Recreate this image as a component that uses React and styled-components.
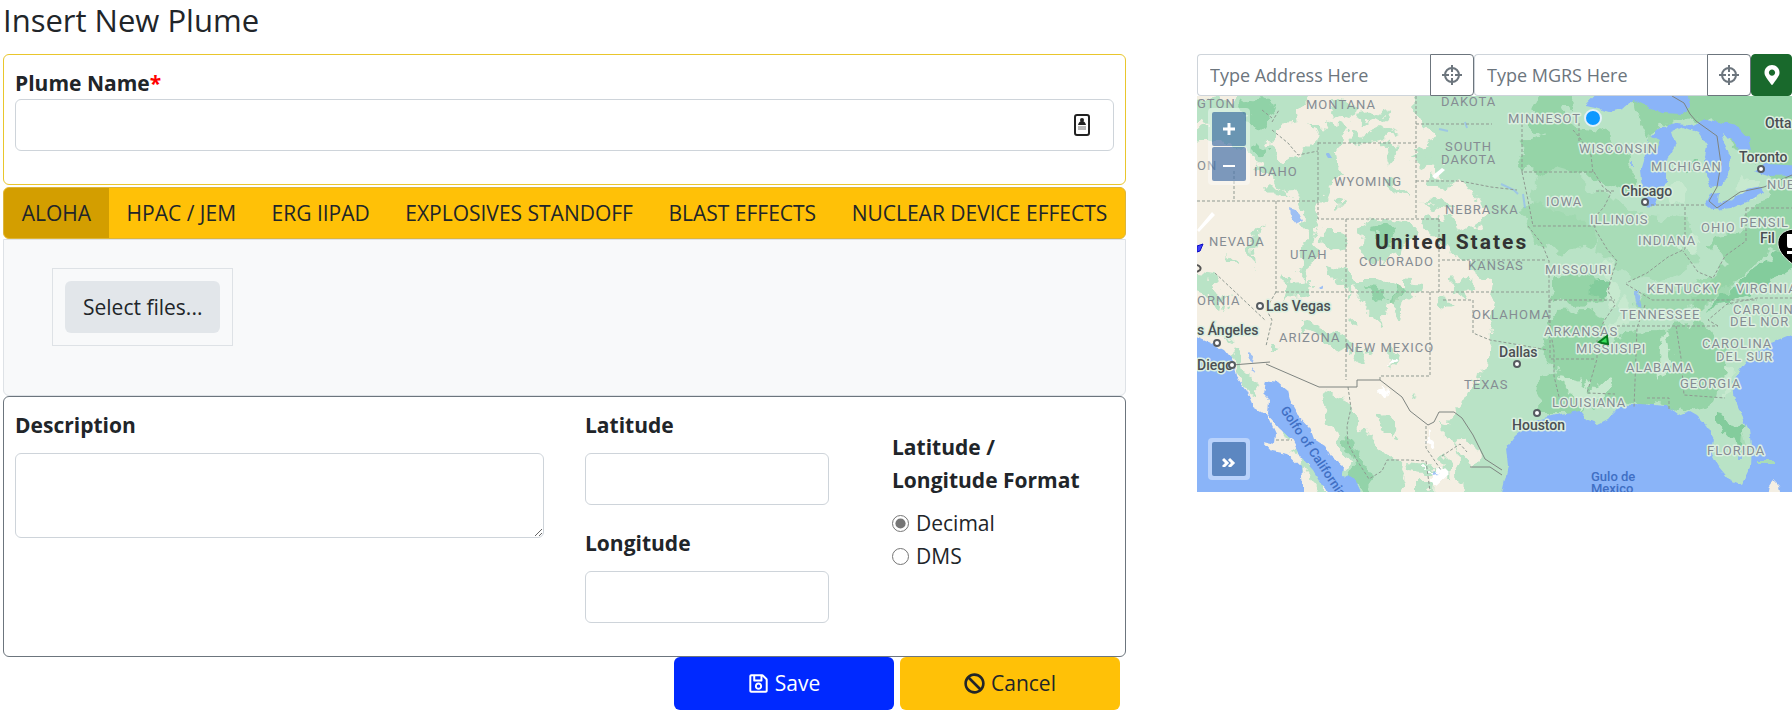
import React from 'react';
import styled, { createGlobalStyle } from 'styled-components';
import { FaRegSave, FaBan, FaMapMarkerAlt } from 'react-icons/fa';

const GlobalStyle = createGlobalStyle`
  * { box-sizing: border-box; }
  body {
    margin: 0;
    background: #fff;
    color: #212529;
    font-family: "Open Sans", "Noto Sans", sans-serif;
    font-size: 21px;
    line-height: 33px;
  }
`

const Page = styled.main`
  padding-left: 3px;
`

const Title = styled.h1`
  margin: 0 0 14px;
  font-size: 31px;
  font-weight: 400;
  line-height: 40px;
`

const Columns = styled.div`
  display: grid;
  grid-template-columns: minmax(0, 1123fr) minmax(0, 595fr);
  gap: 71px;
  align-items: start;
`

const Card = styled.section`
  border: 1px solid ${props => props.$border};
  border-radius: 6px;
  padding: 12px 11px 33px;
`

const Label = styled.label`
  display: block;
  font-weight: 700;
  line-height: 32px;
  margin-bottom: ${props => props.$tight ? 0 : 12}px;
`

const Required = styled.span`
  color: #f00;
`

const Input = styled.input`
  display: block;
  width: 100%;
  height: 52px;
  padding: 8px 16px;
  border: 1px solid #ced4da;
  border-radius: 6px;
  background: #fff;
  color: inherit;
  font: inherit;
`

const InputWrap = styled.div`
  position: relative;
`

const ContactIcon = styled.svg`
  position: absolute;
  top: 15px;
  right: 24px;
`

const TabBar = styled.nav`
  display: flex;
  margin-top: 2px;
  border: 1px solid #dcb53c;
  border-radius: 6px;
  background: #ffc107;
  overflow: hidden;
`

const Tab = styled.button`
  flex: 1 1 auto;
  height: 50px;
  padding: 0;
  border: 0;
  background: ${props => props.$active ? '#d39e00' : 'transparent'};
  color: #212529;
  font: inherit;
  white-space: nowrap;
`

const FilePanel = styled.section`
  border: 1px solid #dee2e6;
  border-radius: 0 0 6px 6px;
  background: #f8f9fa;
  padding: 28px 48px 49px;
`

const FileBox = styled.div`
  display: inline-block;
  vertical-align: top;
  padding: 12px;
  border: 1px solid #dee2e6;
`

const FileButton = styled.button`
  display: block;
  height: 52px;
  padding: 0 18px;
  border: 0;
  border-radius: 6px;
  background: #e2e6ea;
  color: #212529;
  font: inherit;
`

const Details = styled.div`
  display: grid;
  grid-template-columns: minmax(0, 529fr) minmax(0, 244fr) minmax(0, 244fr);
  column-gap: 41px;
`

const TextArea = styled.textarea`
  display: block;
  width: 100%;
  height: 85px;
  padding: 8px 16px;
  border: 1px solid #ced4da;
  border-radius: 6px;
  font: inherit;
  resize: vertical;
`

const Fields = styled.div`
  display: flex;
  flex-direction: column;
  gap: 22px;
`

const Formats = styled.fieldset`
  min-width: 0;
  margin: 0;
  padding: 22px 0 0 22px;
  border: 0;
`

const Legend = styled.legend`
  float: left;
  width: 100%;
  padding: 0;
  margin-bottom: 10px;
  font-weight: 700;
`

const RadioLabel = styled.label`
  display: flex;
  align-items: center;
  gap: 7px;
  clear: both;
`

const Radio = styled.input`
  width: 17px;
  height: 17px;
  margin: 0;
  accent-color: #767676;
`

const Actions = styled.div`
  display: flex;
  justify-content: flex-end;
  gap: 6px;
  padding-right: 6px;
`

const ActionButton = styled.button`
  display: flex;
  align-items: center;
  justify-content: center;
  gap: 6px;
  width: 220px;
  height: 53px;
  border: 0;
  border-radius: 6px;
  background: ${props => props.$primary ? '#0029ff' : '#ffc107'};
  color: ${props => props.$primary ? '#fff' : '#212529'};
  font: inherit;
`

const SearchBar = styled.div`
  display: flex;
`

const SearchInput = styled.input`
  flex: 1 1 0;
  min-width: 0;
  height: 42px;
  padding: 0 12px;
  border: 1px solid #ced4da;
  border-right: 0;
  border-radius: 4px 0 0 4px;
  color: inherit;
  font: inherit;
  font-size: 18px;
  &::placeholder {
    color: #6c757d;
    opacity: 1;
  }
`

const IconButton = styled.button`
  display: flex;
  align-items: center;
  justify-content: center;
  width: ${props => props.$solid ? 41 : 44}px;
  height: 42px;
  padding: 0;
  border: 1px solid ${props => props.$solid ? '#19692c' : '#6c757d'};
  border-radius: ${props => props.$solid ? '4px' : '0 4px 4px 0'};
  background: ${props => props.$solid ? '#19692c' : '#fff'};
  color: ${props => props.$solid ? '#fff' : '#6c757d'};
`

const MapFrame = styled.div`
  position: relative;
  overflow: hidden;
`

const MapSvg = styled.svg`
  display: block;
  width: 100%;
  height: auto;
  font-family: Roboto, sans-serif;
  .halo { paint-order: stroke; stroke: #dcefe0; stroke-width: 3px; stroke-linejoin: round; }
  .state { font-size: 13px; fill: #858c93; letter-spacing: 1px; }
  .city { font-size: 14px; fill: #4b4f54; font-weight: 500; }
  .country { font-size: 21px; fill: #333; font-weight: 700; letter-spacing: 2px; }
  .sea { font-size: 13px; fill: #3f6fc4; font-weight: 500; }
`

const MapControls = styled.div`
  position: absolute;
  left: 11px;
  ${props => props.$bottom ? 'bottom: 12px;' : 'top: 12px;'}
  display: grid;
  gap: 1px;
  padding: 4px;
  border-radius: 4px;
  background: rgba(255, 255, 255, 0.4);
`

const MapButton = styled.button`
  display: flex;
  align-items: center;
  justify-content: center;
  width: 34px;
  height: 34px;
  padding: 0;
  border: 0;
  border-radius: 2px;
  background: rgba(0, 60, 136, 0.5);
  color: #fff;
`

const Crosshair = () => (
  <svg width="20" height="20" viewBox="0 0 20 20" fill="none" stroke="currentColor" strokeWidth="2">
    <circle cx="10" cy="10" r="7" />
    <path d="M10 0v7M10 13v7M0 10h7M13 10h7" />
    <path d="M9 10h2" />
  </svg>
)

const tabs = ['ALOHA', 'HPAC / JEM', 'ERG IIPAD', 'EXPLOSIVES STANDOFF', 'BLAST EFFECTS', 'NUCLEAR DEVICE EFFECTS']

// [name, x, y] with x at the start of the label
const states = [
  ['GTON', 0, 12], ['MONTANA', 109, 13], ['DAKOTA', 244, 10], ['MINNESOT', 311, 27],
  ['SOUTH', 248, 55], ['DAKOTA', 244, 68], ['IDAHO', 57, 80], ['ON', 0, 74],
  ['WYOMING', 137, 90], ['WISCONSIN', 382, 57], ['MICHIGAN', 454, 75], ['NUE', 570, 93],
  ['NEBRASKA', 248, 118], ['IOWA', 349, 110], ['ILLINOIS', 393, 128], ['OHIO', 504, 136],
  ['PENSIL', 543, 131], ['INDIANA', 441, 149], ['NEVADA', 12, 150], ['UTAH', 93, 163],
  ['COLORADO', 162, 170], ['KANSAS', 271, 174], ['MISSOURI', 348, 178], ['KENTUCKY', 450, 197],
  ['VIRGINIA', 539, 197], ['ORNIA', 0, 209], ['TENNESSEE', 423, 223], ['OKLAHOMA', 275, 223],
  ['CAROLIN', 536, 218], ['DEL NOR', 533, 230], ['ARIZONA', 82, 246], ['ARKANSAS', 347, 240],
  ['NEW MEXICO', 148, 256], ['MISSIISIPI', 379, 257], ['CAROLINA', 505, 252], ['DEL SUR', 519, 265],
  ['ALABAMA', 429, 276], ['TEXAS', 267, 293], ['GEORGIA', 483, 292], ['LOUISIANA', 355, 311],
  ['FLORIDA', 510, 359],
]

const cities = [
  ['Otta', 568, 32, 0, 0], ['Toronto', 542, 66, 564, 73], ['Chicago', 424, 100, 448, 106],
  ['Las Vegas', 69, 215, 63, 210], ['s Ángeles', 0, 239, 20, 247], ['Diego', 0, 274, 35, 269],
  ['Dallas', 302, 261, 320, 268], ['Houston', 315, 334, 340, 317], ['Fil', 563, 147, 0, 0],
]

const UsMap = () => (
  <MapSvg viewBox="0 0 595 396" role="img" aria-label="Map of the United States">
    <defs>
      {/* breaks up the straight edges of woods and coasts */}
      <filter id="rough" x="0" y="0" width="595" height="396" filterUnits="userSpaceOnUse">
        <feTurbulence type="fractalNoise" baseFrequency="0.07" numOctaves="3" seed="4" />
        <feDisplacementMap in="SourceGraphic" scale="20" xChannelSelector="R" yChannelSelector="G" />
      </filter>
      <filter id="coast" x="0" y="0" width="595" height="396" filterUnits="userSpaceOnUse">
        <feTurbulence type="fractalNoise" baseFrequency="0.12" numOctaves="2" seed="9" />
        <feDisplacementMap in="SourceGraphic" scale="6" xChannelSelector="R" yChannelSelector="G" />
      </filter>
    </defs>
    <rect width="595" height="396" fill="#f4efe3" />

    <g filter="url(#rough)">
      {/* eastern plains and woodland */}
      <path fill="#b9e3c6" d="M220 -20H620V420H277L274 374L283 357L262 342L253 322L267 306L271 291L286 280L289 263L291 247L296 226L291 208L294 190L280 178L271 164L252 158L236 139L224 130L233 119L254 124L269 133L284 128L291 113L277 95L265 89L249 86L237 76L244 66L222 64L219 51L235 46L242 38L226 31L218 18Z" />
      <path fill="#95d4a7" d="M350 -20L379 4L367 14L378 34L395 36L413 43L430 53L439 80L432 99L410 89L387 78L371 91L352 88L325 70L327 46L345 39L331 26Z" />
      <path fill="#95d4a7" d="M430 -20H620V147L569 157L549 177L525 194L507 212L494 207L516 182L532 166L513 154L525 139L548 136L551 116L574 101L570 72L545 60L527 31L483 24L450 38L438 17Z" />
      <path fill="#95d4a7" d="M352 181L374 175L397 181L410 194L400 207L377 208L356 202ZM361 214L389 213L406 222L411 248L427 237L457 234L481 229L506 224L521 243L535 251L526 276L519 305L492 315L453 306L413 307L387 316L340 316L341 282L359 276L345 253L350 229Z" />
      <path fill="#95d4a7" d="M447 195L483 193L512 181L538 185L523 204L499 209L476 222L450 218L441 207ZM324 111L351 99L389 108L409 132L394 150L357 155L337 143Z" opacity=".7" />
      <path fill="#a8dcb7" d="M340 82L360 73L381 79L395 94L425 104L441 119L466 121L494 126L487 149L502 166L483 176L462 184L430 181L414 164L398 157L401 135L379 120L350 113L331 101Z" />
      <path fill="#83cc9c" d="M390 190c8-9 25-10 24 2c-1 9-12 11-18 7ZM538 188l26-20l51-36v28l-53 34l-34 16l-18 4ZM492 66l9-3l1 11l-8 3ZM520 320l16 4l10 13l4 19l-7 5l-9-17l-14-15Z" />
      <path fill="#c7e9cf" d="M404 164l14 4l-2 17l9 10l-8 19l-10-16l5-15ZM362 278l21 5l10 13l20-18l3 12l-18 20l-14 5ZM526 269l12 3l-3 26l-8 3ZM464 91l18-5l12 18l-18 6ZM542 79l21 7l-5 18l-15-6ZM489 136l20 9l-11 12l-14-7ZM428 198l11 18l-16 18l-11-2ZM466 230l8 38l-9 17l-5-18Z" />

      {/* mountain forests of the west */}
      <path fill="#b9e3c6" d="M-10 8L18 2L31 10L46 -20H103L111 9L97 13L99 25L83 28L72 45L79 59L91 67L104 57L116 46L118 35L110 28L127 31L138 25L151 33L145 45L136 54L137 67L143 77L134 88L127 104L120 111L123 127L118 142L124 158L109 172L111 187L102 176L105 155L112 137L103 125L105 109L98 90L92 95L81 88L74 74L58 69L49 54L31 53L22 43L9 47L-10 42L13 29L-10 24Z" />
      <path fill="#83cc9c" d="M44 5L65 2L77 10L72 22L65 33L56 30L53 17L42 13ZM56 54L65 45L72 52L65 61Z" opacity=".75" />
      <path fill="#b9e3c6" d="M140 4l14 4l8 9l-10 5l-15-5ZM160 20l17-3l16-5l-8 10l-18 8ZM153 34l16 4l16-7l16 6l-12 6l-20 3l-15 3ZM182 46l15 4l3 12l-6 7l-3-12l-9-4ZM188 82l13 8l13 12l-10-2l-15-12ZM214 65l11-5l17 5l2 13l-15-6ZM229 79l14 3l12 7l-10 3l-14-3ZM225 107l22-3l12 4l-12 5ZM139 104l5 7l-5 1ZM70 91l17 1l11 11l-10-2l-13-2Z" />
      <path fill="#b9e3c6" d="M162 132l12-7l20-3l21 5l6 14l-12 7l-2 14l-9-6l-11 13l-14-4l-10-11l3-13ZM124 136l21 0l4 13l-10 4l-14-9ZM131 166l16 8l12 13l-10 12l-6-10l-10-11ZM158 183l23 0l18 7l-3 18l-9 5l-2 17l-8-7l-9-15l-12-14ZM204 184l22 2l-4 10l-13 8l-4 22l-9-6l8-19ZM254 183l18-2l8 9l-13 2l4 14l-12-7ZM84 178l12 9l18-2l-2 12l-14 3l-9 8l2-13Z" />
      <path fill="#83cc9c" d="M174 130l14-2l10 9l-9 5l3 11l-8-3l-3-12ZM169 192l15 1l6 12l-8 4ZM198 192l9 2l-7 16l-8-1Z" opacity=".75" />
      <path fill="#b9e3c6" d="M58 137l8-10l-4 15l-5 12l2 16l-7-8l2-14ZM29 157l12 10l-10-2ZM-10 177l24 4l8 15l12 8l-12-3l6 14l-13-3l-3-14l-22-4ZM104 224l10-2l12 12l17 6l12 5l-2 13l-14-4l-13-10l-14-7l-10-2ZM156 222l8 7l-4 5l-5-6ZM161 252l11 2l-4 12l-9-6ZM196 252l4 8l-4 10l-5-9ZM238 200l8 4l8 2l-10 7l-9-3ZM217 298l7 3l-8 2Z" />
      <path fill="#b9e3c6" d="M126 296L140 299L151 306L157 318L166 328L173 339L180 350L196 363L206 374L211 388L205 420H162L155 386L147 378L151 367L142 350L136 338L128 330L131 315L125 307Z" />
      <path fill="#83cc9c" d="M147 334l8 8l5 20l13 16l8 38h-10l-14-38l-6-21Z" opacity=".7" />
      <path fill="#b9e3c6" d="M180 320l12-1l5 11l-5 9l-8-8ZM198 338l4 7l-5-2ZM245 324l14 2l9 12l-10 11l-12-4ZM206 365l16 1l17 4l-6 7l-23-3ZM258 348l11 13l8 13l0 42h-12l-2-40ZM245 360l9 9l-2 14l-6-5ZM222 386l14 0l-2 30h-12Z" />
      <path fill="#b9e3c6" d="M34 254L43 253L45 260L41 268L52 277L58 288L61 302L51 297L45 286L39 276ZM72 246l7 2l-5 7ZM84 331l9 4l-6 4ZM96 351l12 4l6 13l11 13l8 15h-10l-10-16l-9-13ZM27 241l9 3l-8 4Z" />
      <path fill="#fff" d="M183 291l9 7l-6 3l-4-6ZM193 262l5 3l-6 2ZM231 338l4 12l-7-4ZM228 370l15 2l8 8l-13 12l-9-9Z" />
    </g>
    <path fill="#fff" d="M0 134L15 116L18 119L2 136ZM235 80l10-8l3 2l-10 9Z" />

    {/* water */}
    <g filter="url(#coast)">
      <path fill="#8ab4f8" d="M-10 237L13 247L27 254L36 265L39 280L49 294L56 311L70 319L79 339L78 348L65 345L74 355L90 358L104 371L108 410H-10Z" />
      <path fill="#8ab4f8" d="M68 285L82 287L91 295L94 307L101 319L113 332L117 343L128 350L134 360L146 369L145 380L157 382L170 410H140L123 386L116 374L104 361L95 344L82 332L71 319L72 303L66 297Z" />
      <path fill="#8ab4f8" d="M610 232L573 247L552 262L543 274L535 285L538 303L545 320L552 334L554 350L553 371L545 388L532 383L522 371L515 358L517 343L509 329L499 319L492 315L481 319L469 310L443 308L422 310L411 323L401 328L389 323L383 315L363 318L336 325L318 340L309 352L311 371L302 410H610Z" />
      <path fill="#8ab4f8" d="M388 10L407 -10H488L494 12L485 18L465 17L444 7L436 4L425 13L412 16L402 13ZM452 41L464 31L480 27L496 29L508 23L541 30L552 42L555 54L545 57L534 43L524 37L533 60L531 78L524 90L513 91L507 65L510 50L501 37L486 31L475 36L479 49L469 65L469 87L462 99L458 111L449 110L446 91L444 75L449 58ZM508 108L514 97L522 96L521 107L535 103L550 93L564 90L567 96L552 105L534 113L517 115ZM557 76L568 68L610 70V79L570 80Z" />
      <path fill="#a8dcb7" d="M450 38l14 7l-4 8l-8-6ZM545 336l4 14l-5-1ZM560 365h18v2h-18Z" />
      <path fill="#8ab4f8" d="M93 112L101 115L106 126L100 128L94 121ZM51 256l6 5l-1 5l-5-4ZM54 270l5 7l-5-3ZM437 196h4l4 17l-5-3ZM433 66h3v5h-3ZM128 57h4l3 5h-4ZM540 360h5v4h-5ZM236 376l6 2l-9 1ZM120 193l7-4l-2 5Z" opacity=".8" />
      <path fill="#f4efe3" d="M572 390l4-6l6 6l2 10h-14Z" />
    </g>
    <path fill="none" stroke="#8ab4f8" strokeWidth="2" d="M304 88l13 6l4 4M326 98l2 14M242 33l9 2M268 26l2 6" opacity=".6" />

    {/* state lines */}
    <g fill="none" stroke="#8f9991" strokeWidth="1" strokeDasharray="3 2">
      <path d="M121 46V123H242M121 47H219V123M219 0V47M219 28H295M219 85H263L294 91L320 94M0 105H121M79 105V196M37 75V105M149 123V284M79 196H351M242 123V196M246 204H276V237L293 244L323 249L351 254M233 196V280H183V284M79 196L69 213L75 224L69 250M18 177L69 225" />
      <path d="M325 28V76H397L406 91L414 97L407 111L397 122L398 133L410 153L420 165L415 179L411 195L418 209L407 225L400 241L400 263L395 280L390 297L418 298M325 76L331 104L336 130H399M331 130L345 148L352 165V227L357 255V280L363 305M245 164H350M352 204H418M353 204V263H398" />
      <path d="M376 34l7 8l11 17l2 18M399 95L418 95M449 109H508M488 111V153L471 161L450 177L429 187M429 188L455 204H560M420 230H521M448 209L440 232L437 312M479 230L484 262L487 299L528 302M521 230L511 224L530 208L560 202H595M549 112V145L528 160L516 182L501 176L486 155M549 112H595M382 45V27M450 302H472V313" />
      <path d="M75 26l7-12M75 34l16 13l10 12l20-4M65 14l10 8M151 291L154 312L150 330L151 348L161 366L172 383L185 375L190 364H211L229 365L233 395M79 344H95M229 330V352L244 374M245 360l18-12l7 8" />
    </g>
    <g fill="none" stroke="#7e8480" strokeWidth="1">
      <path d="M69 268L122 291H160V284H183L205 301L213 315L231 329L237 326L242 316H257L265 322L276 339L288 363L305 374" />
      <path d="M35 269L73 266M475 0L487 7L493 18L499 25L520 40L524 68L520 91L512 105L520 112L543 96L567 91L595 79M273 371l20 0l12 8" />
    </g>

    {states.map(([name, x, y]) => (
      <text key={name + x} className={x > 300 ? 'state halo' : 'state'} x={x} y={y}>{name}</text>
    ))}
    <text className="country" x="178" y="153">United States</text>
    {cities.map(([name, x, y, cx, cy]) => (
      <g key={name}>
        <text className="city halo" x={x} y={y}>{name}</text>
        {cx > 0 && <circle cx={cx} cy={cy} r="3" fill="#fff" stroke="#565b60" strokeWidth="2" />}
      </g>
    ))}
    <text className="sea" transform="translate(83 314) rotate(56)">Golfo of California</text>
    <text className="sea" x="394" y="385">Gulo de</text>
    <text className="sea" x="394" y="397">Mexico</text>

    {/* markers */}
    <circle cx="396" cy="22" r="8" fill="#0d99ff" stroke="#e2f1fa" strokeWidth="2" />
    <path d="M402 246l8-6l1 8l-6-1Z" fill="#39df5a" stroke="#087b20" strokeWidth="2" />
    <path d="M0 150l6-2l-3 7l-3 1Z" fill="#3f3ff5" stroke="#0a0ac4" />
    <path d="M0 169q5 2 3 5l-3 2" fill="none" stroke="#555" strokeWidth="2" />
    <path d="M597 133C585 134 580 141 581 149C582 157 590 164 597 169Z" fill="#000" stroke="#e2f1e4" />
    <path d="M590 138h5v14h-3q-2 0-2-3ZM590 155h5v3h-5Z" fill="#fff" />
  </MapSvg>
)

function App() {
  return (
    <Page>
      <GlobalStyle />
      <Title>Insert New Plume</Title>
      <Columns>
        <form onSubmit={e => e.preventDefault()}>
          <Card $border="#e9c62c">
            <Label $tight htmlFor="plume">Plume Name<Required>*</Required></Label>
            <InputWrap>
              <Input id="plume" type="text" />
              <ContactIcon width="16" height="22" viewBox="0 0 16 22">
                <rect x="1" y="1" width="14" height="20" rx="2" fill="#fff" stroke="#222" strokeWidth="2" />
                <circle cx="8" cy="6" r="2" fill="#222" />
                <path d="M4 11q1-4 4-4t4 4Z" fill="#222" />
                <path d="M4 13h8M4 15h8" stroke="#777" />
              </ContactIcon>
            </InputWrap>
          </Card>

          <TabBar>
            {tabs.map((tab, i) => <Tab key={tab} type="button" $active={i === 0}>{tab}</Tab>)}
          </TabBar>

          <FilePanel>
            <FileBox>
              <FileButton type="button">Select files...</FileButton>
            </FileBox>
          </FilePanel>

          <Card $border="#6c757d">
            <Details>
              <div>
                <Label htmlFor="description">Description</Label>
                <TextArea id="description" />
              </div>
              <Fields>
                <div>
                  <Label htmlFor="latitude">Latitude</Label>
                  <Input id="latitude" type="text" />
                </div>
                <div>
                  <Label htmlFor="longitude">Longitude</Label>
                  <Input id="longitude" type="text" />
                </div>
              </Fields>
              <Formats>
                <Legend>Latitude /<br />Longitude Format</Legend>
                <RadioLabel><Radio type="radio" name="format" defaultChecked />Decimal</RadioLabel>
                <RadioLabel><Radio type="radio" name="format" />DMS</RadioLabel>
              </Formats>
            </Details>
          </Card>

          <Actions>
            <ActionButton $primary type="submit"><FaRegSave />Save</ActionButton>
            <ActionButton type="button"><FaBan />Cancel</ActionButton>
          </Actions>
        </form>

        <aside>
          <SearchBar>
            <SearchInput aria-label="Address" placeholder="Type Address Here" />
            <IconButton type="button" aria-label="Find address"><Crosshair /></IconButton>
            <SearchInput aria-label="MGRS" placeholder="Type MGRS Here" />
            <IconButton type="button" aria-label="Find MGRS"><Crosshair /></IconButton>
            <IconButton $solid type="button" aria-label="Place marker"><FaMapMarkerAlt size="20" /></IconButton>
          </SearchBar>
          <MapFrame>
            <UsMap />
            <MapControls>
              <MapButton type="button" aria-label="Zoom in">
                <svg width="14" height="14" viewBox="0 0 14 14"><path d="M7 1v12M1 7h12" stroke="#fff" strokeWidth="3" /></svg>
              </MapButton>
              <MapButton type="button" aria-label="Zoom out">
                <svg width="14" height="14" viewBox="0 0 14 14"><path d="M1 9h12" stroke="#fff" strokeWidth="2" /></svg>
              </MapButton>
            </MapControls>
            <MapControls $bottom>
              <MapButton type="button" aria-label="Expand overview">
                <svg width="14" height="16" viewBox="0 0 14 16"><path d="M1 8l4 4l-4 4M7 8l4 4l-4 4" fill="none" stroke="#fff" strokeWidth="3" /></svg>
              </MapButton>
            </MapControls>
          </MapFrame>
        </aside>
      </Columns>
    </Page>
  )
}

export default App
